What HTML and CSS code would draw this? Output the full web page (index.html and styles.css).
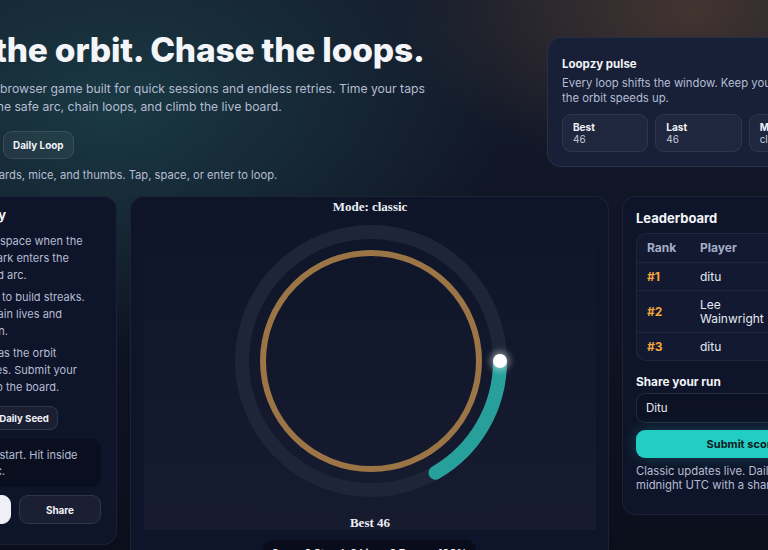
FILE: index.html
```html
<!DOCTYPE html>
<html lang="en">
<head>
<meta charset="utf-8">
<title>Loopzy</title>
<link rel="stylesheet" href="styles.css">
</head>
<body>
<div class="page">
  <header class="hero">
    <div class="hero-copy">
      <h1>Steer the orbit. Chase the loops.</h1>
      <p class="lede">Loopzy is a neon browser game built for quick sessions and endless retries. Time your taps to hit just inside the safe arc, chain loops, and climb the live board.</p>
      <div class="hero-actions">
        <button class="btn btn-light btn-hero">Play Classic</button>
        <button class="btn btn-ghost">Daily Loop</button>
      </div>
      <p class="hint">Intended for keyboards, mice, and thumbs. Tap, space, or enter to loop.</p>
    </div>
    <aside class="pulse-card">
      <h2 class="card-title">Loopzy pulse</h2>
      <p class="card-text">Every loop shifts the window. Keep your focus as the orbit speeds up.</p>
      <div class="stats">
        <div class="stat"><span class="stat-label">Best</span><span class="stat-value">46</span></div>
        <div class="stat"><span class="stat-label">Last</span><span class="stat-value">46</span></div>
        <div class="stat"><span class="stat-label">Mode</span><span class="stat-value">classic</span></div>
      </div>
    </aside>
  </header>

  <main class="arena">
    <section class="panel rules">
      <h2 class="panel-title">How to play</h2>
      <ul class="rule-list">
        <li>Tap or press space when the pale orbit spark enters the bright shaded arc.</li>
        <li>Chain spirals to build streaks. Red arcs regain lives and shields by run.</li>
        <li>Pace climbs as the orbit tightens zones. Submit your best streak to the board.</li>
      </ul>
      <div class="seed-row">
        <button class="btn btn-ghost btn-sm">Classic</button>
        <button class="btn btn-ghost btn-sm">Daily Seed</button>
      </div>
      <div class="tip">Hit play to start. Hit inside the teal arc.</div>
      <div class="controls">
        <button class="btn btn-light btn-md">Start loop</button>
        <button class="btn btn-ghost btn-md">Share</button>
      </div>
    </section>

    <section class="panel stage-panel">
      <svg class="stage" width="452" height="333" viewBox="0 0 452 333">
        <defs>
          <linearGradient id="stagebg" x1="0" y1="0" x2="0" y2="1">
            <stop offset="0" stop-color="#0f1529"/>
            <stop offset="1" stop-color="#161b2f"/>
          </linearGradient>
          <filter id="glow" x="-1" y="-1" width="3" height="3">
            <feGaussianBlur stdDeviation="3"/>
          </filter>
        </defs>
        <rect width="452" height="333" fill="url(#stagebg)"/>
        <text class="stage-label" x="226" y="13.5" text-anchor="middle">Mode: classic</text>
        <circle cx="227" cy="164" r="129" fill="none" stroke="#1e2538" stroke-width="14"/>
        <circle cx="227" cy="164" r="108" fill="none" stroke="#9c7546" stroke-width="6"/>
        <path d="M356 164 A129 129 0 0 1 291.5 275.7" fill="none" stroke="#27a09c" stroke-width="14" stroke-linecap="round"/>
        <circle cx="356" cy="164" r="10" fill="#ffffff" opacity="0.4" filter="url(#glow)"/>
        <circle cx="356" cy="164" r="7" fill="#ffffff"/>
        <text class="stage-label" x="226" y="329.5" text-anchor="middle">Best 46</text>
      </svg>
      <div class="status">Score 0 Streak 0 Lives 3 Energy 100%</div>
    </section>

    <section class="panel board">
      <h2 class="panel-title">Leaderboard</h2>
      <div class="table-wrap">
        <table class="scores">
          <thead>
            <tr><th class="col-rank">Rank</th><th class="col-player">Player</th><th>Score</th></tr>
          </thead>
          <tbody>
            <tr><td class="rank">#1</td><td>ditu</td><td>46</td></tr>
            <tr><td class="rank">#2</td><td>Lee Wainwright</td><td>41</td></tr>
            <tr><td class="rank">#3</td><td>ditu</td><td>38</td></tr>
          </tbody>
        </table>
      </div>
      <label class="field-label" for="name">Share your run</label>
      <input id="name" class="field" type="text" value="Ditu">
      <button class="btn btn-teal">Submit score</button>
      <p class="note">Classic updates live. Daily resets at midnight UTC with a shared seed.</p>
    </section>
  </main>
</div>
</body>
</html>
```

FILE: styles.css
```css
* {
  box-sizing: border-box;
  margin: 0;
  padding: 0;
}

html,
body {
  width: 768px;
  height: 550px;
  overflow: hidden;
}

body {
  font-family: Inter, "Noto Sans", sans-serif;
  color: #b5bdd3;
  background:
    radial-gradient(560px 340px at 110px 110px, rgba(32, 84, 88, 0.55), rgba(32, 84, 88, 0) 70%),
    radial-gradient(420px 230px at 690px 10px, rgba(112, 78, 52, 0.5), rgba(112, 78, 52, 0) 70%),
    linear-gradient(180deg, #141b2c 0%, #0f1424 55%, #0b0f1c 100%);
}

.page {
  width: 963px;
  margin-left: -101px;
  padding-top: 30px;
}

/* hero */
.hero {
  display: grid;
  grid-template-columns: 540px 303px;
  column-gap: 108px;
  align-items: start;
}

h1 {
  font-size: 33.5px;
  line-height: 40px;
  font-weight: 800;
  color: #f4f5f9;
  letter-spacing: -0.2px;
  white-space: nowrap;
}

.lede {
  margin-top: 10px;
  font-size: 12.2px;
  line-height: 18px;
  max-width: 532px;
}

.hero-actions {
  display: flex;
  gap: 8px;
  margin-top: 15px;
}

.hint {
  margin-top: 7px;
  font-size: 11.2px;
  line-height: 18px;
}

.btn {
  font-family: Inter, "Noto Sans", sans-serif;
  font-weight: 700;
  font-size: 9.9px;
  height: 28px;
  padding: 0 9px;
  border-radius: 9px;
  cursor: pointer;
}

.btn-light {
  background: #eef0f5;
  color: #0d1322;
  border: 1px solid #eef0f5;
}

.btn-ghost {
  background: rgba(255, 255, 255, 0.05);
  color: #f1f3f8;
  border: 1px solid rgba(255, 255, 255, 0.1);
}

.btn-hero {
  width: 96px;
}

.btn-sm {
  height: 24px;
  padding: 0 8px;
  border-radius: 8px;
  font-size: 9.6px;
}

.btn-md {
  height: 29px;
}

.pulse-card {
  margin-top: 7px;
  padding: 17px 14px 14px;
  background: #172037;
  border: 1px solid rgba(255, 255, 255, 0.07);
  border-radius: 14px;
}

.card-title {
  font-size: 11.5px;
  line-height: 18px;
  color: #f3f4f8;
  font-weight: 700;
}

.card-text {
  margin-top: 3px;
  font-size: 11.3px;
  line-height: 15px;
}

.stats {
  display: grid;
  grid-template-columns: repeat(3, 1fr);
  gap: 7px;
  margin-top: 8px;
}

.stat {
  display: flex;
  flex-direction: column;
  padding: 6px 10px;
  background: rgba(255, 255, 255, 0.035);
  border: 1px solid rgba(255, 255, 255, 0.07);
  border-radius: 9px;
  font-size: 10px;
  line-height: 12px;
}

.stat-label {
  color: #f1f2f6;
  font-weight: 700;
}

.stat-value {
  color: #c3c9da;
}

/* arena */
.arena {
  display: grid;
  grid-template-columns: 218px 479px 240px;
  column-gap: 13px;
  align-items: start;
  margin-top: 12px;
}

.panel {
  background: #0e1429;
  border: 1px solid rgba(255, 255, 255, 0.06);
  border-radius: 14px;
}

.panel-title {
  font-size: 13px;
  line-height: 18px;
  font-weight: 700;
  color: #f3f4f8;
}

.rules {
  padding: 9px 15px 20px 32px;
}

.rule-list {
  list-style: none;
  display: flex;
  flex-direction: column;
  gap: 5px;
  margin-top: 9px;
}

.rule-list li {
  font-size: 11px;
  line-height: 17px;
}

.seed-row {
  display: flex;
  gap: 6px;
  margin-top: 10px;
}

.tip {
  margin-top: 9px;
  padding: 8px 12px;
  background: #0a0f20;
  border-radius: 10px;
  font-size: 11px;
  line-height: 16px;
}

.controls {
  display: grid;
  grid-template-columns: 1fr 82px;
  gap: 8px;
  margin-top: 8px;
}

.stage-panel {
  padding: 0 13px 13px;
}

.stage {
  display: block;
}

.stage-label {
  font-family: "Liberation Serif", serif;
  font-weight: 700;
  font-size: 13px;
  fill: #eceef4;
}

.status {
  width: fit-content;
  margin: 10px auto 0;
  padding: 6px 9px;
  background: #090d1b;
  border-radius: 10px;
  font-size: 10.6px;
  line-height: 16px;
  font-weight: 700;
  color: #f1f3f8;
}

.board {
  padding: 12px 13px 22px;
}

.table-wrap {
  margin-top: 6px;
  background: #121930;
  border: 1px solid rgba(255, 255, 255, 0.06);
  border-radius: 10px;
  overflow: hidden;
}

.scores {
  width: 100%;
  border-collapse: collapse;
  font-size: 12px;
}

.scores th,
.scores td {
  text-align: left;
  padding: 7px 10px 6px;
  line-height: 14px;
  vertical-align: middle;
}

.scores th {
  padding-top: 6px;
  padding-bottom: 7px;
  line-height: 15px;
  color: #a4adc7;
  font-weight: 700;
}

.scores td {
  color: #e6e9f1;
  border-top: 1px solid rgba(255, 255, 255, 0.06);
}

.col-rank {
  width: 53px;
}

.col-player {
  width: 90px;
}

.scores td.rank {
  color: #f1a73c;
  font-weight: 700;
}

.field-label {
  display: block;
  margin-top: 12px;
  font-size: 11.8px;
  line-height: 18px;
  font-weight: 700;
  color: #f3f4f8;
}

.field {
  display: block;
  width: 100%;
  height: 30px;
  margin-top: 2px;
  padding: 0 9px;
  background: #0c1224;
  border: 1px solid rgba(255, 255, 255, 0.1);
  border-radius: 9px;
  color: #e6e9f2;
  font-family: Inter, "Noto Sans", sans-serif;
  font-size: 11.5px;
}

.btn-teal {
  display: block;
  width: 100%;
  margin-top: 7px;
  background: #22cdc3;
  color: #0b1b24;
  border: none;
  font-size: 11px;
  box-shadow: 0 0 16px rgba(34, 205, 195, 0.25);
}

.note {
  margin-top: 6px;
  font-size: 11.3px;
  line-height: 14px;
}
```
